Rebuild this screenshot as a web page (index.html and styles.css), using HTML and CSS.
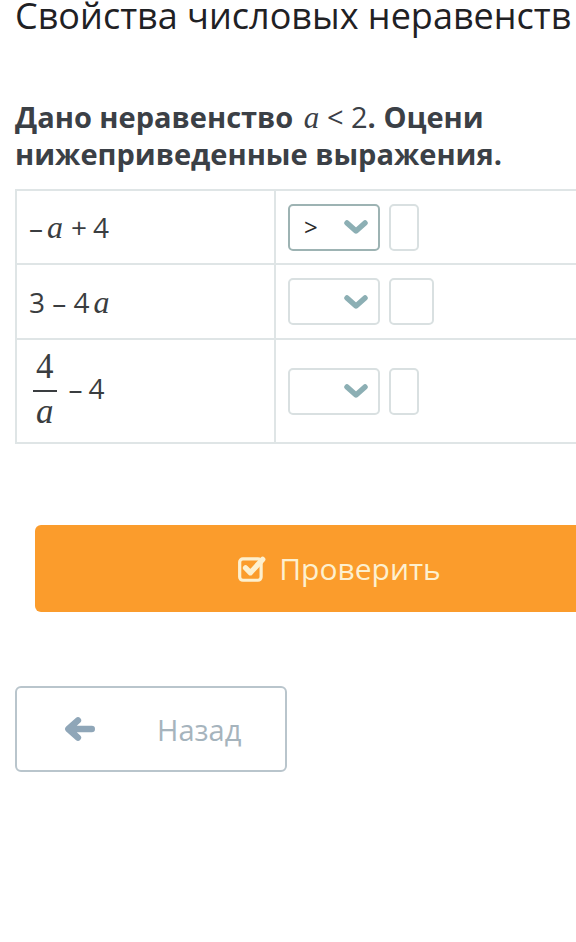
FILE: index.html
```html
<!DOCTYPE html>
<html lang="ru">
<head>
  <meta charset="UTF-8">
  <meta name="viewport" content="width=device-width, initial-scale=1.0">
  <title>Свойства числовых неравенств</title>
  <link rel="stylesheet" href="styles.css">
</head>
<body>
  <h1 class="title">Свойства числовых неравенств</h1>

  <p class="question">Дано неравенство <span class="mi">a</span> <span class="mo">&lt; 2</span>. Оцени нижеприведенные выражения.</p>

  <table class="task">
    <tr class="row-1">
      <td class="expr"><span class="mo">–</span><span class="mi">a</span><span class="mo op">+</span><span class="mo">4</span></td>
      <td class="answer">
        <div class="controls">
          <div class="select filled"><span class="value">&gt;</span><svg class="chev" viewBox="0 0 24 16"><path d="M3 4 L12 12 L21 4" /></svg></div>
          <div class="box"></div>
        </div>
      </td>
    </tr>
    <tr class="row-2">
      <td class="expr"><span class="mo">3 – 4</span><span class="mi">a</span></td>
      <td class="answer">
        <div class="controls">
          <div class="select"><span class="value"></span><svg class="chev" viewBox="0 0 24 16"><path d="M3 4 L12 12 L21 4" /></svg></div>
          <div class="box wide"></div>
        </div>
      </td>
    </tr>
    <tr class="row-3">
      <td class="expr">
        <span class="frac"><span class="num">4</span><span class="den"><span class="mi">a</span></span></span><span class="mo op">–</span><span class="mo">4</span>
      </td>
      <td class="answer">
        <div class="controls">
          <div class="select"><span class="value"></span><svg class="chev" viewBox="0 0 24 16"><path d="M3 4 L12 12 L21 4" /></svg></div>
          <div class="box"></div>
        </div>
      </td>
    </tr>
  </table>

  <div class="check-wrap">
    <button class="check">
      <svg class="check-icon" viewBox="0 0 28 28"><rect x="2.5" y="4.5" width="20" height="20" rx="3" /><path d="M8 13 L12.5 17.5 L24 5" /></svg>
      Проверить
    </button>
  </div>

  <button class="back">
    <svg class="arrow" viewBox="0 0 30 24"><path d="M27 12 H8 M14 4 L5 12 L14 20" /></svg>
    <span>Назад</span>
  </button>
</body>
</html>
```

FILE: styles.css
```css
body {
  margin: 0;
  padding: 0 0 0 15px;
  background: #fff;
  font-family: "Open Sans", sans-serif;
  color: #2b2f33;
  overflow: hidden;
  width: 700px;
}
.title {
  font-size: 36px;
  font-weight: 400;
  color: #1f2124;
  margin: -7px 0 0 0;
  line-height: 46px;
  white-space: nowrap;
}
.question {
  font-size: 29px;
  font-weight: 700;
  color: #3b4046;
  line-height: 37px;
  margin: 59px 0 17px 0;
  width: 520px;
}
.mi {
  font-family: "Liberation Serif", serif;
  font-style: italic;
  font-weight: 400;
  font-size: 31px;
  line-height: 1;
  margin-left: 3px;
}
.mo {
  font-weight: 400;
}
.op {
  margin: 0 6px;
}
.task {
  border-collapse: collapse;
  width: 600px;
}
.task td {
  border: 2px solid #dfe5e6;
  padding: 0;
}
.expr {
  width: 245px;
  padding-left: 12px !important;
  font-size: 28px;
  color: #3a3d40;
  white-space: nowrap;
}
.expr .mi {
  font-size: 32px;
  margin: 0 2px 0 4px;
}
.row-1 td { height: 72px; }
.row-2 td { height: 73px; }
.row-3 td { height: 102px; }
.answer {
  padding-left: 12px !important;
}
.controls {
  display: flex;
  gap: 9px;
  align-items: center;
}
.select {
  border: 2px solid #d9e0e1;
  border-radius: 5px;
  display: flex;
  align-items: center;
  justify-content: space-between;
  padding: 0 10px 0 14px;
  box-sizing: border-box;
  width: 92px;
  height: 47px;
}
.select.filled {
  border-color: #9db3b3;
}
.value {
  font-size: 24px;
  color: #2a2a2a;
  line-height: 1;
}
.chev {
  width: 24px;
  height: 16px;
}
.chev path {
  fill: none;
  stroke: #8cafb4;
  stroke-width: 5.5;
  stroke-linecap: round;
  stroke-linejoin: round;
}
.box {
  width: 30px;
  height: 47px;
  border: 2px solid #d9e0e1;
  border-radius: 5px;
  box-sizing: border-box;
}
.box.wide {
  width: 45px;
}
.frac {
  display: inline-flex;
  flex-direction: column;
  align-items: center;
  vertical-align: middle;
  margin: 0 6px 0 4px;
}
.num {
  font-family: "Liberation Serif", serif;
  font-size: 35px;
  line-height: 34px;
  padding: 0 3px 6px;
  border-bottom: 2px solid #3a3d40;
}
.den {
  line-height: 40px;
}
.den .mi {
  font-size: 35px;
  margin: 0;
}
.check-wrap {
  margin-top: 81px;
  padding-left: 20px;
}
.check {
  width: 608px;
  height: 87px;
  background: #fb9c2c;
  border: none;
  border-radius: 6px;
  color: #fdf0cf;
  font-family: "Open Sans", sans-serif;
  font-size: 30px;
  display: flex;
  align-items: center;
  justify-content: center;
  gap: 12px;
  padding: 0;
}
.check-icon {
  width: 30px;
  height: 30px;
}
.check-icon rect {
  fill: none;
  stroke: #fdf0cf;
  stroke-width: 3;
}
.check-icon path {
  fill: none;
  stroke: #fdf0cf;
  stroke-width: 5;
  stroke-linecap: round;
  stroke-linejoin: round;
}
.back {
  margin-top: 74px;
  width: 272px;
  height: 86px;
  background: #fff;
  border: 2px solid #b9c5cc;
  border-radius: 6px;
  display: flex;
  align-items: center;
  padding: 0 0 0 46px;
  gap: 62px;
  font-family: "Open Sans", sans-serif;
  font-size: 29px;
  color: #a6b4bd;
  box-sizing: border-box;
}
.arrow {
  width: 32px;
  height: 26px;
}
.arrow path {
  fill: none;
  stroke: #8fa6b8;
  stroke-width: 6;
  stroke-linecap: round;
  stroke-linejoin: round;
}
```
